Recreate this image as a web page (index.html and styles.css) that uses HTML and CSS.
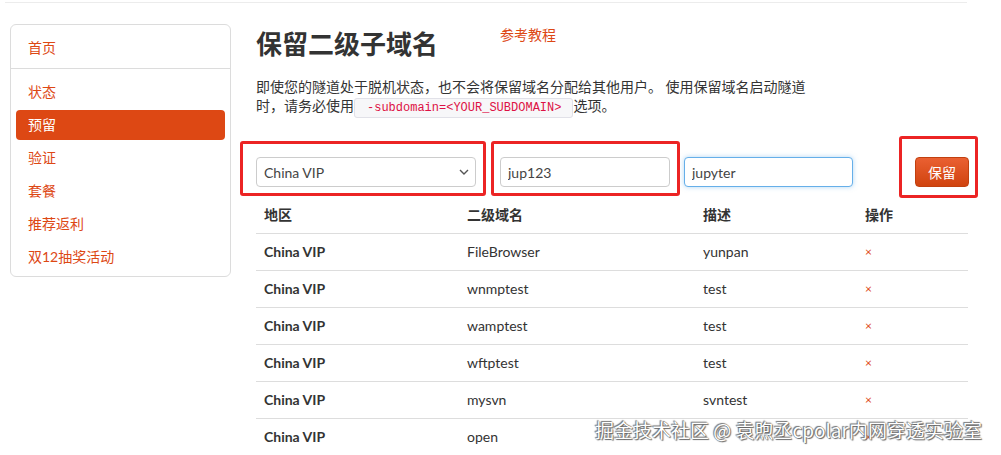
FILE: index.html
```html
<!DOCTYPE html>
<html>
    <head lang="zh">
        <meta charset="UTF-8">
        <title>预留</title>
        <link rel="stylesheet" href="styles.css">
    </head>
    <body>
        <div id="top-line"></div>
        <div id="layout">
            <div id="sidebar">
                <a class="nav-home" href="#">首页</a>
                <div class="nav-divider"></div>
                <ul id="nav">
                    <li><a href="#">状态</a></li>
                    <li class="active"><a href="#">预留</a></li>
                    <li><a href="#">验证</a></li>
                    <li><a href="#">套餐</a></li>
                    <li><a href="#">推荐返利</a></li>
                    <li><a href="#">双12抽奖活动</a></li>
                </ul>
            </div>
            <div id="main">
                <div class="title-row">
                    <h1>保留二级子域名</h1>
                    <a class="tutorial" href="#">参考教程</a>
                </div>
                <p class="intro">即使您的隧道处于脱机状态，也不会将保留域名分配给其他用户。 使用保留域名启动隧道时，请务必使用<code>-subdomain=&lt;YOUR_SUBDOMAIN&gt;</code>选项。</p>
                <div class="form-row">
                    <div class="select">
                        <span>China VIP</span>
                        <svg width="10" height="6" viewBox="0 0 10 6"><path d="M1 1l4 4 4-4" fill="none" stroke="#555" stroke-width="1.4"/></svg>
                    </div>
                    <input class="field field-name" type="text" value="jup123">
                    <input class="field field-desc focus" type="text" value="jupyter">
                    <button class="btn-reserve">保留</button>
                    <span class="mark mark-1"></span>
                    <span class="mark mark-2"></span>
                    <span class="mark mark-3"></span>
                </div>
                <table id="list">
                    <thead>
                        <tr>
                            <th class="c-region">地区</th>
                            <th class="c-sub">二级域名</th>
                            <th class="c-desc">描述</th>
                            <th class="c-op">操作</th>
                        </tr>
                    </thead>
                    <tbody>
                        <tr><th>China VIP</th><td>FileBrowser</td><td>yunpan</td><td><a class="del" href="#">×</a></td></tr>
                        <tr><th>China VIP</th><td>wnmptest</td><td>test</td><td><a class="del" href="#">×</a></td></tr>
                        <tr><th>China VIP</th><td>wamptest</td><td>test</td><td><a class="del" href="#">×</a></td></tr>
                        <tr><th>China VIP</th><td>wftptest</td><td>test</td><td><a class="del" href="#">×</a></td></tr>
                        <tr><th>China VIP</th><td>mysvn</td><td>svntest</td><td><a class="del" href="#">×</a></td></tr>
                        <tr><th>China VIP</th><td>open</td><td></td><td><a class="del" href="#">×</a></td></tr>
                    </tbody>
                </table>
            </div>
        </div>
        <div id="watermark">掘金技术社区 @ 袁煦丞cpolar内网穿透实验室</div>
    </body>
</html>
```

FILE: styles.css
```css
*{
    margin:0;
    padding:0;
    box-sizing:border-box;
}
ul,ol{
    list-style:none;
}
a{
    text-decoration:none;
    color:#dd4814;
}
html,body{
    height:100%;
    overflow:hidden;
}
body{
    font-family:Lato,"Noto Sans CJK SC",sans-serif;
    font-size:14px;
    color:#333;
    background:#fff;
    position:relative;
}
#top-line{
    height:3px;
    width:962px;
    margin-left:5px;
    border-bottom:1px solid #ececec;
}
#layout{
    display:flex;
    align-items:flex-start;
    gap:25px;
    padding:21px 0 0 10px;
}
#sidebar{
    width:221px;
    border:1px solid #dcdcdc;
    border-radius:6px;
    padding-bottom:4px;
}
.nav-home{
    display:block;
    height:30px;
    line-height:30px;
    margin:8px 5px 5px;
    padding-left:12px;
}
.nav-divider{
    height:1px;
    background:#dcdcdc;
}
#nav{
    padding-top:8px;
}
#nav li{
    margin:0 5px 3px;
}
#nav li:last-child{
    margin-bottom:0;
}
#nav li a{
    display:block;
    height:30px;
    line-height:30px;
    padding-left:12px;
    border-radius:4px;
}
#nav li.active a{
    background:#dd4814;
    color:#fff;
}
#main{
    width:712px;
}
.title-row{
    display:flex;
    align-items:flex-start;
    margin-top:2px;
}
h1{
    font-size:26px;
    line-height:36px;
    font-weight:bold;
    color:#333;
}
.tutorial{
    margin-left:62px;
    margin-top:-1px;
    line-height:20px;
}
.intro{
    width:555px;
    margin-top:15px;
    line-height:19px;
    height:38px;
}
code{
    font-family:"Liberation Mono",monospace;
    font-size:12px;
    line-height:1;
    color:#dd1144;
    background:#f7f7f9;
    border:1px solid #e1e1e8;
    border-radius:3px;
    padding:2px 11px 2px 12px;
}
.form-row{
    position:relative;
    display:flex;
    margin-top:42px;
    height:30px;
}
.select{
    flex:none;
    width:220px;
    height:30px;
    border:1px solid #cccccc;
    border-radius:4px;
    display:flex;
    align-items:center;
    justify-content:space-between;
    padding:0 6px 0 7px;
    font-size:14px;
    color:#444;
}
.field{
    flex:none;
    height:30px;
    border:1px solid #cccccc;
    border-radius:4px;
    padding:0 7px;
    font-family:Lato,"Noto Sans CJK SC",sans-serif;
    font-size:14px;
    color:#444;
    outline:none;
}
.field-name{
    width:170px;
    margin-left:24px;
}
.field-desc{
    width:169px;
    margin-left:14px;
}
.field.focus{
    border-color:#66afe9;
    box-shadow:0 0 5px rgba(102,175,233,0.5);
}
.btn-reserve{
    flex:none;
    width:54px;
    height:30px;
    margin-left:62px;
    border:1px solid #c1400f;
    border-radius:4px;
    background:linear-gradient(#ea6032,#d0430f);
    color:#fff;
    font-family:Lato,"Noto Sans CJK SC",sans-serif;
    font-size:14px;
}
.mark{
    position:absolute;
    border:3px solid #ec2424;
    border-radius:3px;
}
.mark-1{
    left:-16px;
    top:-16px;
    width:246px;
    height:55px;
}
.mark-2{
    left:235px;
    top:-16px;
    width:189px;
    height:55px;
}
.mark-3{
    left:643px;
    top:-21px;
    width:79px;
    height:62px;
}
#list{
    width:712px;
    margin-top:10px;
    border-collapse:collapse;
    table-layout:fixed;
}
#list th,#list td{
    text-align:left;
    padding:7px 8px 8px;
    line-height:20px;
}
#list thead th{
    padding:8px;
    font-weight:bold;
    border-bottom:1px solid #dddddd;
}
#list tbody tr{
    border-bottom:1px solid #dddddd;
}
#list tbody th{
    font-weight:bold;
}
.c-region{
    width:203px;
}
.c-sub{
    width:236px;
}
.c-desc{
    width:162px;
}
.c-op{
    width:111px;
}
.del{
    font-size:12px;
    color:#dd4814;
}
#watermark{
    position:absolute;
    left:595px;
    top:418px;
    font-family:"Noto Sans CJK SC",sans-serif;
    font-size:19px;
    line-height:24px;
    color:#fff;
    text-shadow:0 0 1px #555,1px 1px 1px #666,-1px -1px 1px #777;
    white-space:nowrap;
}
```
